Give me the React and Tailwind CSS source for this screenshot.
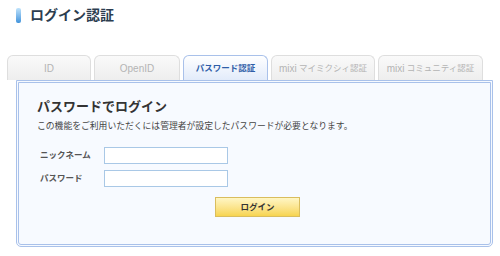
import React from "react";

const tabs = [
  { latin: "ID", w: "w-[84px]" },
  { latin: "OpenID", w: "w-[86px]" },
  { label: "パスワード認証", w: "w-[85px]", active: true },
  { latin: "mixi", label: " マイミクシィ認証", w: "w-[104px]" },
  { latin: "mixi", label: " コミュニティ認証", w: "w-[105px]" },
];

const App = () => {
  return (
    <div
      className="w-[500px] h-[256px] bg-white overflow-hidden"
      style={{ fontFamily: '"Liberation Sans", "Noto Sans CJK JP", sans-serif' }}
    >
      {/* タイトル */}
      <div className="flex items-center pt-[5px] pl-[16px] h-[25px]">
        <div className="w-[5px] h-[15px] rounded-[2px] bg-gradient-to-b from-[#bfe3fb] to-[#3f93db]" />
        <h1 className="ml-[9px] text-[14px] font-bold leading-none text-[#2c3d4f]">
          ログイン認証
        </h1>
      </div>

      {/* タブ */}
      <div className="flex items-end gap-[3px] pl-[7px] mt-[30px] h-[25px]">
        {tabs.map((t, i) => (
          <div
            key={i}
            className={
              t.active
                ? `${t.w} h-[25px] rounded-t-[6px] border border-b-0 border-[#a9c1ea] bg-gradient-to-b from-[#ffffff] to-[#e2ebfa] flex items-center justify-center text-[8.5px] font-bold text-[#2f5ea8] whitespace-pre`
                : `${t.w} h-[25px] rounded-t-[6px] border border-b-0 border-[#dedede] bg-gradient-to-b from-[#fafafa] to-[#eeeeee] flex items-center justify-center text-[8.5px] text-[#b4b4b4] whitespace-pre`
            }
          >
            {t.latin && <span className="text-[10px]">{t.latin}</span>}
            {t.label}
          </div>
        ))}
      </div>

      {/* パネル */}
      <div className="ml-[16px] w-[477px] h-[167px] border-[3px] border-double border-[#a9c1ea] rounded-b-[5px] bg-[#f7faff] pl-[18px] pt-[15px]">
        <h2 className="text-[13px] font-bold leading-[18px] text-[#333333]">パスワードでログイン</h2>
        <p className="mt-[4px] text-[8.8px] leading-[13px] text-[#444444]">
          この機能をご利用いただくには管理者が設定したパスワードが必要となります。
        </p>
        <div className="mt-[14px] flex items-center">
          <span className="w-[67px] pl-[3px] text-[8.5px] font-bold text-[#555555]">ニックネーム</span>
          <input className="w-[124px] h-[17px] border border-[#a9c8e6] bg-white" />
        </div>
        <div className="mt-[6px] flex items-center">
          <span className="w-[67px] pl-[3px] text-[8.5px] font-bold text-[#555555]">パスワード</span>
          <input type="password" className="w-[124px] h-[17px] border border-[#a9c8e6] bg-white" />
        </div>
        <div className="mt-[6px] pl-[178px]">
          <button className="w-[85px] h-[20px] border border-[#d9bd5e] bg-gradient-to-b from-[#fff6c4] to-[#f7d44f] text-[8.5px] font-bold text-[#333333]">
            ログイン
          </button>
        </div>
      </div>
    </div>
  );
};

export default App;
